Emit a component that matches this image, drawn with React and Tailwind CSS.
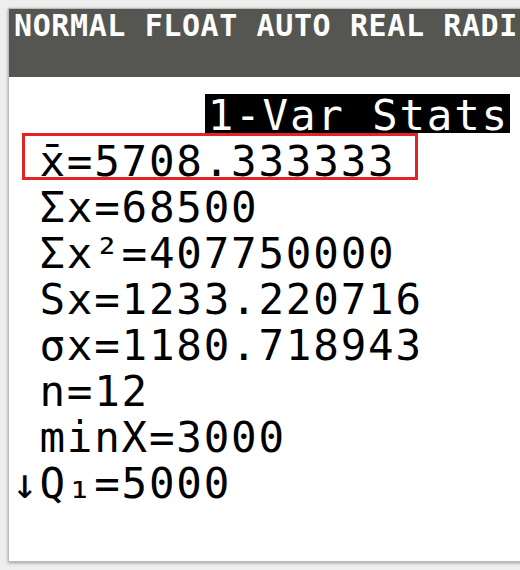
const rows = [
  " \u0078\u0304=5708.333333",
  " \u03A3x=68500",
  " \u03A3x\u00B2=407750000",
  " Sx=1233.220716",
  " \u03C3x=1180.718943",
  " n=12",
  " minX=3000",
  "\u2193Q\u2081=5000",
];

export default function App() {
  return (
    <div className="w-[520px] h-[570px] overflow-hidden bg-[#eeeeee] pt-[8px] pl-[8px]">
      <div
        className="w-[540px] h-[554px] bg-white border border-[#bcbcbc] shadow-[0_1px_3px_rgba(0,0,0,0.35)]"
        style={{ fontFamily: '"DejaVu Sans Mono", "Liberation Mono", monospace' }}
      >
        <div className="h-[68px] bg-[#555652] pt-[1px] pl-[5px]">
          <div className="text-[30px] leading-[32px] tracking-[0.6px] font-bold text-white whitespace-pre">
            NORMAL FLOAT AUTO REAL RADI
          </div>
        </div>

        <div className="pl-[3px] text-[42.5px] leading-[46px] tracking-[1.8px] text-black">
          <div className="mt-[17px] h-[39px] w-[498px] flex justify-end">
            <span className="block h-[39px] leading-[35px] pt-[4px] pl-[3px] pr-[1px] bg-black text-white whitespace-pre">
              1-Var Stats
            </span>
          </div>

          <div className="mt-[6px]">
            {rows.map((r, i) => (
              <div key={i} className="relative h-[46px] whitespace-pre">
                {r}
                {i === 0 && (
                  <div className="absolute left-[10px] top-[-6px] w-[396px] h-[47px] border-[3px] border-[#e22424]" />
                )}
              </div>
            ))}
          </div>
        </div>
      </div>
    </div>
  );
}
